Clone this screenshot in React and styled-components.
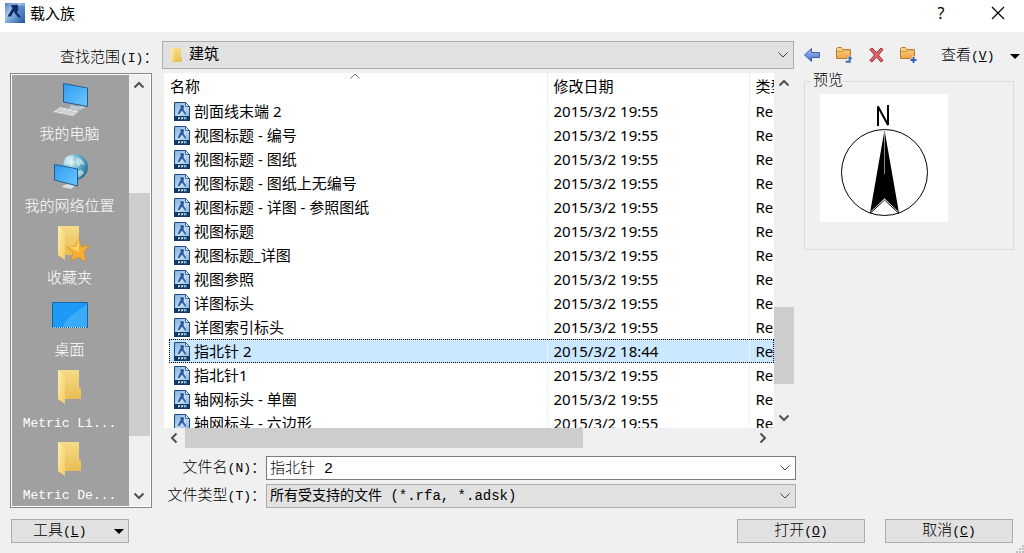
import React from "react";
import styled, { createGlobalStyle, css } from "styled-components";

const uiFont = `"Noto Sans", "Noto Sans CJK SC", sans-serif`;
const songFont = `"Liberation Mono", "Noto Sans CJK SC", monospace`;

const GlobalStyle = createGlobalStyle`
  * { box-sizing: border-box; }
  body { margin: 0; background: #f0f0f0; }
  button, input, select { font: inherit; color: inherit; margin: 0; border-radius: 0; }
`;

const Dialog = styled.div`
  display: flex;
  flex-direction: column;
  height: 100vh;
  overflow: hidden;
  color: #000;
  background: #f0f0f0;
  font: 300 15px/20px ${songFont};
`;

const TitleBar = styled.header`
  display: flex;
  align-items: center;
  height: 32px;
  padding: 0 10px 6px 5px;
  background: #fff;
`;

const Title = styled.h1`
  flex: 1;
  margin: 0 0 0 5px;
  font: 400 15px/20px ${uiFont};
`;

const BareButton = styled.button`
  display: inline-flex;
  align-items: center;
  justify-content: center;
  padding: 0;
  border: 0;
  background: none;
`;

const CaptionButton = styled(BareButton)`
  width: 32px;
  height: 26px;
  margin-left: 25px;
  font: 400 16px/20px ${uiFont};
`;

const Body = styled.main`
  flex: 1;
  min-height: 0;
  display: grid;
  grid-template-columns: 142px minmax(0, 1fr) 220px;
  grid-template-rows: 28px minmax(0, 1fr);
  gap: 4px 10px;
  padding: 9px 0 0 10px;
`;

const Latin = styled.span`
  font-size: 13px;
`;

const LookInLabel = styled.label`
  padding: 8px 0 0 50px;
  white-space: nowrap;
`;

const ComboBox = styled.div`
  display: flex;
  align-items: center;
  position: relative;
  min-width: 0;
  height: ${(p) => (p.$tall ? 28 : 24)}px;
  padding-left: ${(p) => (p.$tall ? 5 : 0)}px;
  border: 1px solid ${(p) => (p.$editable ? "#7a7a7a" : "#adadad")};
  background: ${(p) => (p.$editable ? "#fff" : "#e1e1e1")};
`;

const controlText = css`
  flex: 1;
  min-width: 0;
  height: 100%;
  padding: 0 24px 2px 3px;
  border: 0;
  outline: 0;
  background: none;
  appearance: none;
`;

const Select = styled.select`
  ${controlText}
  font: ${(p) => (p.$ui ? `400 15px/20px ${uiFont}` : `400 14px/20px ${songFont}`)};
  ${(p) => (p.$ui ? "padding: 0 24px 4px 5px;" : "padding-bottom: 0;")}
`;

const TextInput = styled.input`
  ${controlText}
  font: 300 15px/20px ${songFont};
`;

const ComboArrow = styled.svg`
  position: absolute;
  right: 4px;
  pointer-events: none;
`;

const Places = styled.nav`
  display: flex;
  min-height: 0;
  padding: 1px;
  border: 1px solid #828790;
  background: #fff;
`;

const PlaceList = styled.div`
  flex: 1;
  overflow: hidden;
  background: #a0a0a0;
`;

const Place = styled.button`
  display: flex;
  flex-direction: column;
  align-items: center;
  gap: 7px;
  width: 100%;
  height: 72px;
  padding: 4px 2px 1px 0;
  border: 0;
  background: none;
  color: #fff;
  white-space: nowrap;
`;

const ScrollBar = styled.div`
  display: flex;
  flex: none;
  flex-direction: ${(p) => (p.$horizontal ? "row" : "column")};
  ${(p) => (p.$horizontal ? "height: 20px; margin-right: 21px;" : `width: ${p.$size}px;`)}
  background: #f0f0f0;
`;

const ScrollButton = styled(BareButton)`
  flex: none;
  width: 20px;
  height: 20px;
`;

const ScrollSpace = styled.div`
  flex: ${(p) => p.$share} 1 0;
`;

const ScrollThumb = styled(ScrollSpace)`
  background: #cdcdcd;
`;

const Center = styled.section`
  display: flex;
  flex-direction: column;
  min-height: 0;
  min-width: 0;
`;

const FilePanel = styled.div`
  flex: 1;
  min-height: 0;
  display: flex;
  flex-direction: column;
  margin-bottom: 8px;
  padding-left: 2px;
`;

const FileArea = styled.div`
  flex: 1;
  min-height: 0;
  display: flex;
`;

const FileView = styled.div`
  flex: 1;
  min-width: 0;
  overflow: hidden;
  padding-left: 5px;
  background: #fff;
`;

const FileTable = styled.table`
  width: 100%;
  table-layout: fixed;
  border-collapse: collapse;
  font: 400 15px/20px ${uiFont};
`;

const HeadCell = styled.th`
  position: relative;
  width: ${(p) => p.$width || "auto"};
  height: 26px;
  padding: ${(p) => (p.$first ? "0 0 0 1px" : "0 0 0 6px")};
  border-left: ${(p) => (p.$first ? "0" : "1px solid #ececec")};
  font-weight: 400;
  text-align: left;
  white-space: nowrap;
  overflow: hidden;
`;

const SortMark = styled.svg`
  position: absolute;
  top: 0;
  left: 48%;
`;

const FileRow = styled.tr`
  height: 24px;
  ${(p) =>
    p.$selected &&
    css`
      background: #cce8ff;
      outline: 1px dotted #000;
      outline-offset: -1px;
    `}
`;

const Cell = styled.td`
  height: 24px;
  padding: 0 0 0 6px;
  border-left: 1px solid #f0f3f7;
  white-space: nowrap;
  overflow: hidden;
`;

const NameCell = styled(Cell)`
  padding-left: 5px;
  border-left: 0;
`;

const FileName = styled.div`
  display: flex;
  align-items: center;
  gap: 4px;
`;

const Field = styled.div`
  display: grid;
  grid-template-columns: 104px minmax(0, 1fr);
  align-items: center;
  margin-right: -2px;
  & + & { margin-top: 4px; }
`;

const FieldLabel = styled.label`
  justify-self: end;
  padding-top: 2px;
  white-space: nowrap;
`;

const Toolbar = styled.div`
  display: flex;
  align-items: center;
  gap: 14px;
`;

const ToolButton = styled(BareButton)`
  width: 18px;
  height: 20px;
`;

const ViewButton = styled(BareButton)`
  flex: 1;
  justify-content: space-between;
  padding: 3px 3px 0 9px;
  white-space: nowrap;
`;

const Preview = styled.fieldset`
  align-self: start;
  min-width: 0;
  margin: 0 10px 0 0;
  padding: 5px 15px 27px;
  border: 1px solid #dcdcdc;

  legend {
    margin-left: -8px;
    padding: 1px 1px 0;
    line-height: 15px;
  }

  svg {
    display: block;
    background: #fff;
  }
`;

const Footer = styled.footer`
  display: flex;
  gap: 20px;
  margin-top: 11px;
  padding: 0 11px 10px;
`;

const PushButton = styled.button`
  display: flex;
  align-items: center;
  justify-content: center;
  width: ${(p) => (p.$menu ? 118 : 128)}px;
  height: 24px;
  padding: 2px 0 0;
  border: 1px solid #adadad;
  background: #e1e1e1;
  ${(p) => p.$menu && "justify-content: space-between; padding: 2px 3px 0 21px; margin-right: auto;"}
`;

const Grip = styled.svg`
  position: fixed;
  right: 0;
  bottom: 0;
`;

const Chevron = ({ dir = "down" }) => (
  <svg width="12" height="12" viewBox="0 0 12 12" aria-hidden="true">
    <path
      d={{ down: "M1.5 3.5 6 8l4.5-4.5", up: "M1.5 8.5 6 4l4.5 4.5", left: "M8.5 1.5 4 6l4.5 4.5", right: "M3.5 1.5 8 6l-4.5 4.5" }[dir]}
      fill="none"
      stroke="#505050"
      strokeWidth="2"
    />
  </svg>
);

const DropArrow = () => (
  <ComboArrow width="12" height="12" viewBox="0 0 12 12" aria-hidden="true">
    <path d="M1.500 3.500 6 8l4.500-4.500" fill="none" stroke="#444" />
  </ComboArrow>
);

const MenuArrow = () => (
  <svg width="12" height="6" viewBox="0 0 12 6" aria-hidden="true">
    <path d="M1 0h10L6 5z" fill="#000" />
  </svg>
);

const Defs = () => (
  <svg width="0" height="0" style={{ position: "absolute" }} aria-hidden="true">
    <defs>
      <linearGradient id="appTile" x1="0" y1="0" x2="1" y2="1">
        <stop offset="0" stopColor="#4f80c4" />
        <stop offset=".35" stopColor="#a9c7ea" />
        <stop offset=".6" stopColor="#6b98d2" />
        <stop offset="1" stopColor="#1d4b96" />
      </linearGradient>
      <linearGradient id="fileTile" x1="0" y1="0" x2="1" y2="1">
        <stop offset="0" stopColor="#7fabdd" />
        <stop offset=".5" stopColor="#c3daf2" />
        <stop offset="1" stopColor="#7aa6da" />
      </linearGradient>
      <linearGradient id="screen" x1="0" y1="0" x2="1" y2="1">
        <stop offset="0" stopColor="#2d9bf0" />
        <stop offset="1" stopColor="#6fc8ff" />
      </linearGradient>
      <linearGradient id="folderFront" x1="0" y1="0" x2="1" y2="1">
        <stop offset="0" stopColor="#fff0ae" />
        <stop offset="1" stopColor="#f3cb62" />
      </linearGradient>
      <linearGradient id="folderBack" x1="0" y1="0" x2="0" y2="1">
        <stop offset="0" stopColor="#f6db85" />
        <stop offset="1" stopColor="#e8bd52" />
      </linearGradient>
      <linearGradient id="arrowBlue" x1="0" y1="0" x2="0" y2="1">
        <stop offset="0" stopColor="#a9c3f5" />
        <stop offset="1" stopColor="#3f6ccb" />
      </linearGradient>
      <linearGradient id="toolFolder" x1="0" y1="0" x2="0" y2="1">
        <stop offset="0" stopColor="#ffd68c" />
        <stop offset="1" stopColor="#eba445" />
      </linearGradient>
      <radialGradient id="globe" cx=".35" cy=".3" r=".8">
        <stop offset="0" stopColor="#d9f2f8" />
        <stop offset=".5" stopColor="#5aaac6" />
        <stop offset="1" stopColor="#1e6289" />
      </radialGradient>
    </defs>
  </svg>
);

const AppIcon = () => (
  <svg width="20" height="20" viewBox="0 0 20 20" aria-hidden="true">
    <path d="M0 0h20v20H0z" fill="url(#appTile)" />
    <path d="M11 8c4 2 7 6 9 11V4l-5-2z" fill="#3f74bd" opacity=".6" />
    <path d="M5.500 2.500 12 1.500l1.500 2-.5 4-1 1.500 4 5-2.500.5-4-4.500-.5-2-3 5.500H2.500L7.500 5z" fill="#0d2b66" />
  </svg>
);

const FamilyIcon = () => (
  <svg width="16" height="19" viewBox="0 0 16 19" aria-hidden="true">
    <path d="M.5.5h11l4 4v14H.5z" fill="url(#fileTile)" stroke="#1d4c80" />
    <path d="M11.500.5v4h4z" fill="#e8f2fc" stroke="#1d4c80" strokeWidth=".8" />
    <path d="M5.500 3.500 9 3l1 1.500-.5 3 3 4.500-1.500.5L8 8.500 5.500 12H3.500L7 5z" fill="#2a5a9f" />
    <path d="M0 14h16v5H0z" fill="#123a66" />
    <path d="M4.500 17.500v-2h1.500M4.500 16.500H6M7.500 17.500v-2H9v1H7.500M10.500 17.500v-2H12v2" fill="none" stroke="#d5e4f4" strokeWidth=".8" />
  </svg>
);

const SmallFolder = () => (
  <svg width="16" height="18" viewBox="0 0 16 18" aria-hidden="true">
    <path d="M4 2h9v9l1 1v4H4z" fill="url(#folderBack)" />
    <path d="M3 2l4 2v13l-4-3z" fill="url(#folderFront)" />
  </svg>
);

const FolderArt = () => (
  <>
    <path d="M8 3h21v17l2 2v10H8z" fill="url(#folderBack)" />
    <path d="M8 3l7 5v29l-7-5z" fill="url(#folderFront)" />
  </>
);

const placeArt = {
  computer: (
    <>
      <path d="M20 29l13-2 2 2-9 3z" fill="#c7d0d8" />
      <path d="M13.500 4.500 37.500 9v18.500L13.500 23z" fill="url(#screen)" stroke="#245d8d" />
      <path d="M21 26l10 2v3l-12-1z" fill="#bcc7d0" />
      <path d="M10 28l19 4-6 5-20-4z" fill="#e6e8ea" stroke="#b3b6b8" strokeWidth=".6" />
      <path d="M8 30l18 4M6 31.500l18 3.500M13 29l-6 5M18 30l-6 5M23 31l-6 5" stroke="#aeb1b4" strokeWidth=".6" />
    </>
  ),
  network: (
    <>
      <circle cx="25" cy="16" r="13" fill="url(#globe)" />
      <path d="M15 7c3-3 6-3 9-2l-2 4 3 2-3 4-5-2-3 1zM27 6l5 3 3 5-4-1-3 3-2-4zM27 20l5-1 2 3-5 5z" fill="#dff1ef" opacity=".65" />
      <path d="M14 34l5-1 6 2-4 3-9-2z" fill="#dbe1e5" />
      <path d="M4.500 13.500 27.500 18v17L4.500 29z" fill="url(#screen)" stroke="#245d8d" />
    </>
  ),
  favorites: (
    <>
      <FolderArt />
      <path d="M29 15l2 9 8-2-5 7 2 10-8-5-7 4 2-8-6-6 8 0z" fill="#f6ae35" stroke="#d98a20" strokeWidth=".6" />
      <path d="M29 15l0 14-11-5 8 0z" fill="#ffd36b" />
    </>
  ),
  desktop: (
    <>
      <path d="M2.500 7.500h35v25h-35z" fill="#1b9bf7" stroke="#1765a5" />
      <path d="M13 32C16 22 26 18 37 9v23z" fill="#52b5fa" opacity=".6" />
      <path d="M3 32.500h34" stroke="#c4e4fb" strokeDasharray="1 1" />
    </>
  ),
  folder: <FolderArt />,
};

const PlaceIcon = ({ kind }) => (
  <svg width="40" height="40" viewBox="0 0 40 40" aria-hidden="true">
    {placeArt[kind]}
  </svg>
);

const ToolFolder = ({ children }) => (
  <svg width="18" height="18" viewBox="0 0 18 18" aria-hidden="true">
    <path d="M.5 12.500v-10l1-1h4l1.500 2h7.500v9z" fill="url(#toolFolder)" stroke="#b97a38" />
    <path d="M1 5.500h6l1.500-1.500h6" fill="none" stroke="#c88a42" strokeWidth=".8" />
    {children}
  </svg>
);

const BackIcon = () => (
  <svg width="18" height="16" viewBox="0 0 18 16" aria-hidden="true">
    <path d="M.5 8 7.500 1.500v4h8v5h-8v4z" fill="url(#arrowBlue)" stroke="#3b5dab" strokeLinejoin="round" />
  </svg>
);

const DeleteIcon = () => (
  <svg width="16" height="16" viewBox="0 0 16 16" aria-hidden="true">
    <path d="M.8 2.500 3 1l4.500 4.500L12 1l2 1.500L9.500 8l4.500 5.500-2 1.500-4.500-5L3 15 .8 13.500 5.500 8z" fill="#d9666a" stroke="#a9323a" strokeLinejoin="round" />
  </svg>
);

const Compass = () => (
  <svg width="128" height="128" viewBox="0 0 128 128" role="img" aria-label="指北针预览">
    <path d="M58 32V12.500L68 31V11" fill="none" stroke="#000" strokeWidth="2" />
    <circle cx="64.500" cy="78.500" r="43" fill="none" stroke="#000" />
    <path d="M64.500 36 79 119 64.500 104.500 50 119z" />
    <path d="M64.500 37v43" stroke="#888" />
    <path d="M50 119.500 64.500 106 79 119.500" fill="none" stroke="#000" />
    <path d="M51 117.500 64.500 105 78 117.500" fill="none" stroke="#fff" strokeWidth=".7" />
  </svg>
);

const places = [
  ["computer", "我的电脑"],
  ["network", "我的网络位置"],
  ["favorites", "收藏夹"],
  ["desktop", "桌面"],
  ["folder", <Latin key="li">Metric Li...</Latin>],
  ["folder", <Latin key="de">Metric De...</Latin>],
];

const files = [
  ["剖面线末端 2", "19:55"],
  ["视图标题 - 编号", "19:55"],
  ["视图标题 - 图纸", "19:55"],
  ["视图标题 - 图纸上无编号", "19:55"],
  ["视图标题 - 详图 - 参照图纸", "19:55"],
  ["视图标题", "19:55"],
  ["视图标题_详图", "19:55"],
  ["视图参照", "19:55"],
  ["详图标头", "19:55"],
  ["详图索引标头", "19:55"],
  ["指北针 2", "18:44"],
  ["指北针1", "19:55"],
  ["轴网标头 - 单圈", "19:55"],
  ["轴网标头 - 六边形", "19:55"],
];

const Key = ({ children }) => (
  <Latin>
    (<u>{children}</u>)
  </Latin>
);

const Scroller = ({ horizontal, shares, size = 20 }) => (
  <ScrollBar $horizontal={horizontal} $size={size}>
    <ScrollButton type="button" aria-label={horizontal ? "向左滚动" : "向上滚动"}>
      <Chevron dir={horizontal ? "left" : "up"} />
    </ScrollButton>
    <ScrollSpace $share={shares[0]} />
    <ScrollThumb $share={shares[1]} />
    <ScrollSpace $share={shares[2]} />
    <ScrollButton type="button" aria-label={horizontal ? "向右滚动" : "向下滚动"}>
      <Chevron dir={horizontal ? "right" : "down"} />
    </ScrollButton>
  </ScrollBar>
);

export default function App() {
  return (
    <Dialog>
      <GlobalStyle />
      <Defs />
      <TitleBar>
        <AppIcon />
        <Title>载入族</Title>
        <CaptionButton type="button" aria-label="帮助">?</CaptionButton>
        <CaptionButton type="button" aria-label="关闭">
          <svg width="14" height="14" viewBox="0 0 14 14" aria-hidden="true">
            <path d="M1 1l12 12M13 1 1 13" stroke="#000" strokeWidth="1.200" />
          </svg>
        </CaptionButton>
      </TitleBar>
      <Body>
        <LookInLabel htmlFor="look-in">
          查找范围<Latin>(I)</Latin>：
        </LookInLabel>
        <ComboBox $tall>
          <SmallFolder />
          <Select id="look-in" $ui>
            <option>建筑</option>
          </Select>
          <DropArrow />
        </ComboBox>
        <Toolbar>
          <ToolButton type="button" aria-label="后退"><BackIcon /></ToolButton>
          <ToolButton type="button" aria-label="上一级">
            <ToolFolder>
              <path d="M9.500 17h5.500v-4h2L14 9.500 11 13h1.500v1.500h-3z" fill="#416bb5" stroke="#eef3fb" strokeWidth=".5" />
            </ToolFolder>
          </ToolButton>
          <ToolButton type="button" aria-label="删除"><DeleteIcon /></ToolButton>
          <ToolButton type="button" aria-label="新建文件夹">
            <ToolFolder>
              <path d="M13.500 10.500v7M10 14h7" stroke="#eef3fb" strokeWidth="3" />
              <path d="M13.500 11v6M10.500 14h6" stroke="#3b62b0" strokeWidth="2" />
            </ToolFolder>
          </ToolButton>
          <ViewButton type="button">
            <span>查看<Key>V</Key></span>
            <MenuArrow />
          </ViewButton>
        </Toolbar>

        <Places aria-label="位置">
          <PlaceList>
            {places.map(([kind, label], i) => (
              <Place type="button" key={i}>
                <PlaceIcon kind={kind} />
                <span>{label}</span>
              </Place>
            ))}
          </PlaceList>
          <Scroller shares={[98, 243, 50]} size={21} />
        </Places>

        <Center>
          <FilePanel>
            <FileArea>
              <FileView>
                <FileTable>
                  <thead>
                    <tr>
                      <HeadCell $first>
                        名称
                        <SortMark width="10" height="6" viewBox="0 0 10 6" aria-hidden="true">
                          <path d="M.5 5.500 5 1l4.500 4.500" fill="none" stroke="#777" />
                        </SortMark>
                      </HeadCell>
                      <HeadCell $width="202px">修改日期</HeadCell>
                      <HeadCell $width="25px">类型</HeadCell>
                    </tr>
                  </thead>
                  <tbody>
                    {files.map(([name, time]) => (
                      <FileRow key={name} $selected={name === "指北针 2"}>
                        <NameCell>
                          <FileName>
                            <FamilyIcon />
                            {name}
                          </FileName>
                        </NameCell>
                        <Cell>2015/3/2 {time}</Cell>
                        <Cell>Re</Cell>
                      </FileRow>
                    ))}
                  </tbody>
                </FileTable>
              </FileView>
              <Scroller shares={[213, 77, 24]} />
            </FileArea>
            <Scroller horizontal shares={[1, 398, 170]} />
          </FilePanel>
          <Field>
            <FieldLabel htmlFor="file-name">
              文件名<Latin>(N)</Latin>：
            </FieldLabel>
            <ComboBox $editable>
              <TextInput id="file-name" defaultValue="指北针 2" />
              <DropArrow />
            </ComboBox>
          </Field>
          <Field>
            <FieldLabel htmlFor="file-type">
              文件类型<Latin>(T)</Latin>：
            </FieldLabel>
            <ComboBox>
              <Select id="file-type">
                <option>所有受支持的文件 (*.rfa, *.adsk)</option>
              </Select>
              <DropArrow />
            </ComboBox>
          </Field>
        </Center>

        <Preview>
          <legend>预览</legend>
          <Compass />
        </Preview>
      </Body>
      <Footer>
        <PushButton type="button" $menu>
          <span>工具<Key>L</Key></span>
          <MenuArrow />
        </PushButton>
        <PushButton type="button">
          <span>打开<Key>O</Key></span>
        </PushButton>
        <PushButton type="button">
          <span>取消<Key>C</Key></span>
        </PushButton>
      </Footer>
      <Grip width="8" height="8" viewBox="0 0 8 8" aria-hidden="true">
        <path d="M6 0h2v2H6zM3 3h2v2H3zM6 3h2v2H6zM0 6h2v2H0zM3 6h2v2H3zM6 6h2v2H6z" fill="#bfbfbf" />
      </Grip>
    </Dialog>
  );
}
